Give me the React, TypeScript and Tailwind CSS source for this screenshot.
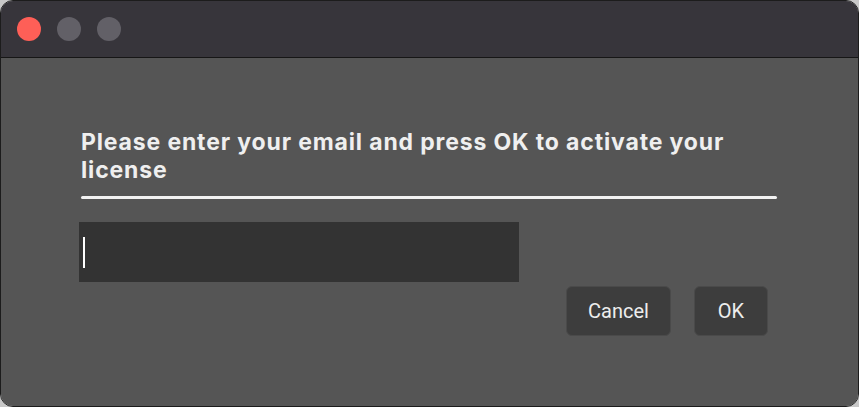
import React from "react";

function TrafficLights() {
  return (
    <div className="flex items-center gap-4 pl-[16px]">
      <span className="block h-6 w-6 rounded-full bg-[#fe5f57]" />
      <span className="block h-6 w-6 rounded-full bg-[#626067]" />
      <span className="block h-6 w-6 rounded-full bg-[#626067]" />
    </div>
  );
}

export default function App() {
  return (
    <div className="h-[407px] w-[859px] bg-[#c8c8c8]">
      <div className="flex h-full w-full flex-col overflow-hidden rounded-[13px] border border-[#1c1c1c] shadow-[inset_0_0_0_1px_rgba(255,255,255,0.28)]">
        <div className="flex h-[57px] shrink-0 items-center border-b border-[#161616] bg-[#37353b]">
          <TrafficLights />
        </div>
        <div className="flex flex-1 flex-col bg-[#555555] pl-[80px] pr-[81px] pt-[70px]">
          <h1
            className="text-[23px] font-bold leading-[28px] tracking-[0.85px] text-[#efefef]"
            style={{ fontFamily: "Inter, 'Liberation Sans', sans-serif" }}
          >
            Please enter your email and press OK to activate your license
          </h1>
          <div className="mt-[12px] h-[3px] w-[696px] rounded-full bg-[#f2f2f2]" />
          <div className="-ml-[2px] mt-[23px] flex h-[60px] w-[440px] items-center bg-[#333333] pl-[4px]">
            <span className="block h-[31px] w-[2px] bg-white" />
          </div>
          <div
            className="mt-[4px] flex justify-end gap-[23px] pr-[9px]"
            style={{ fontFamily: "Roboto, 'Liberation Sans', sans-serif" }}
          >
            <button className="h-[50px] w-[105px] rounded-[6px] border border-[#4a4a4a] bg-[#3d3d3d] text-[20px] text-[#ededed]">
              Cancel
            </button>
            <button className="h-[50px] w-[74px] rounded-[6px] border border-[#4a4a4a] bg-[#3d3d3d] text-[20px] text-[#ededed]">
              OK
            </button>
          </div>
        </div>
      </div>
    </div>
  );
}
